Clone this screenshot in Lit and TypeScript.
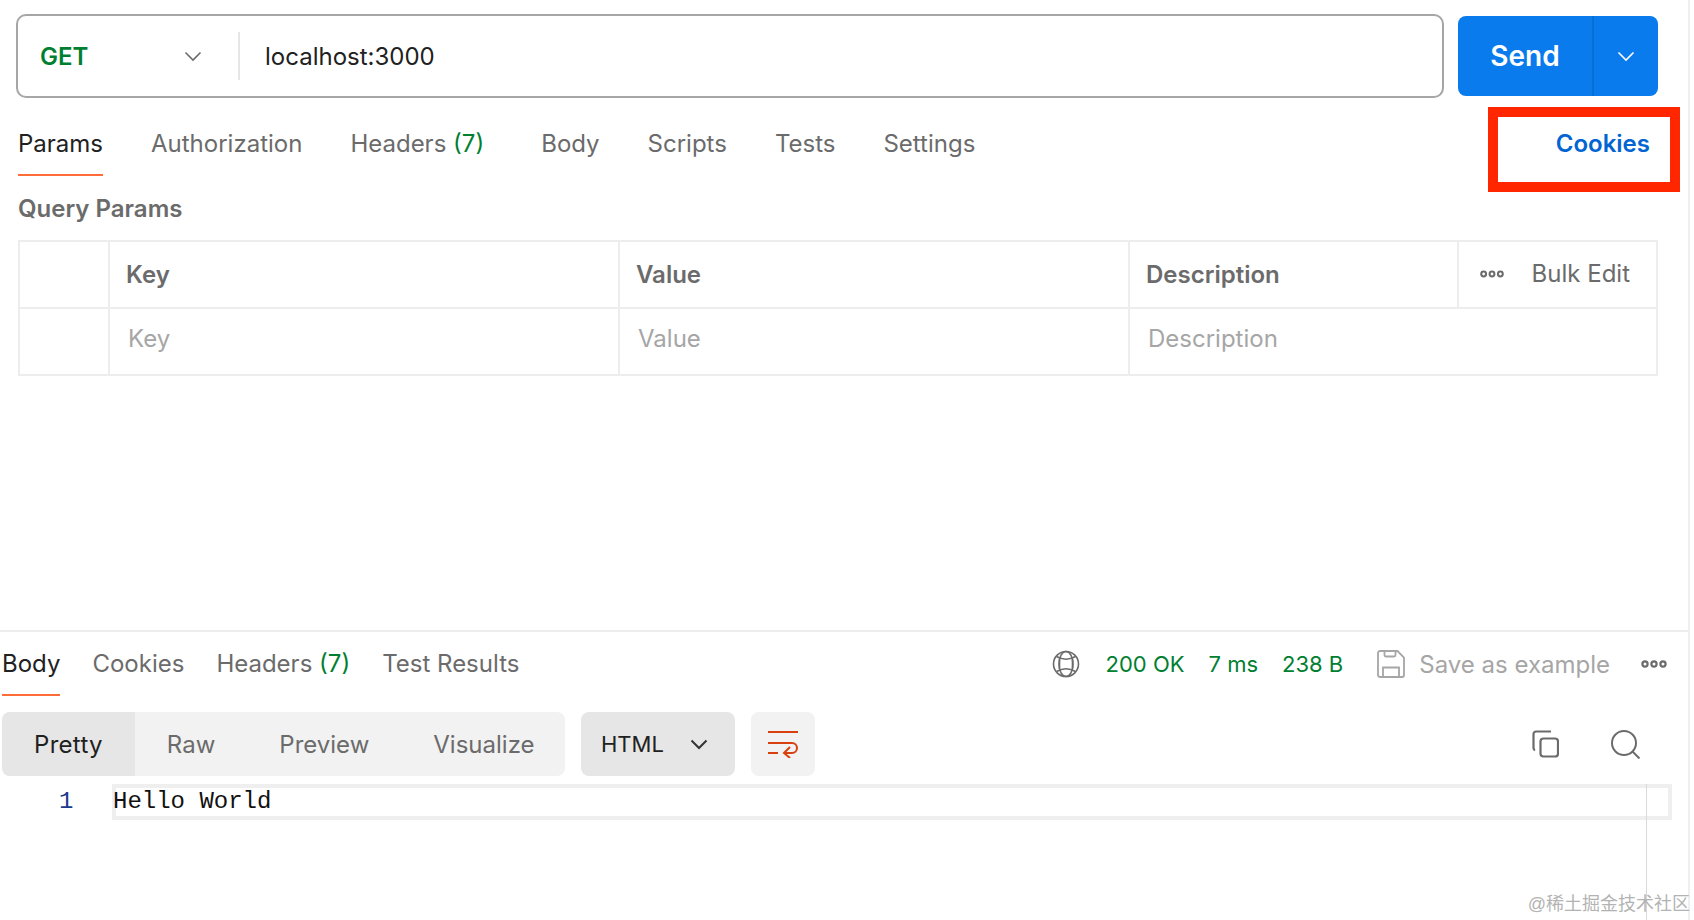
import { LitElement, html, css, svg } from "lit";
import { customElement } from "lit/decorators.js";

const chevron = (size: number, color: string, width = 1.6) => html`<svg width=${size} height=${size} viewBox="0 0 20 20" fill="none" stroke=${color} stroke-width=${width}><path d="M2.5 6.5 10 14l7.5-7.5" /></svg>`;

const dots = (size: number, color: string) => html`<svg width=${size} height="10" viewBox="0 0 28 10" fill="none" stroke=${color} stroke-width="2.2"><circle cx="5" cy="5" r="2.6" /><circle cx="14" cy="5" r="2.6" /><circle cx="23" cy="5" r="2.6" /></svg>`;

const globe = svg`<circle cx="14" cy="14" r="12.5" /><ellipse cx="14" cy="14" rx="7" ry="12.5" /><path d="M4.5 6.5Q14 12 23.5 6.5M4.5 21.5Q14 16 23.5 21.5M7.5 9.5v9M20.5 9.5v9" />`;

@customElement("app-root")
export class AppRoot extends LitElement {
  static styles = css`
    :host {
      display: block;
      position: relative;
      width: 1694px;
      height: 920px;
      overflow: hidden;
      background: #fff;
      font-family: Inter, "Noto Sans", sans-serif;
      font-size: 24px;
      color: #6b6b6b;
    }

    .page {
      width: 1690px;
      height: 920px;
      box-sizing: border-box;
      border-right: 2px solid #efefef;
    }

    .request {
      height: 632px;
      box-sizing: border-box;
      padding: 14px 30px 0 16px;
      border-bottom: 2px solid #ededed;
    }

    .url-row {
      display: flex;
      align-items: center;
      gap: 14px;
    }

    .url-bar {
      flex: 1;
      height: 84px;
      box-sizing: border-box;
      border: 2px solid #a6a6a6;
      border-radius: 10px;
      display: flex;
      align-items: center;
    }

    .method {
      width: 222px;
      box-sizing: border-box;
      height: 48px;
      padding: 0 35px 0 22px;
      display: flex;
      align-items: center;
      justify-content: space-between;
      border-right: 2px solid #e6e6e6;
      color: #007f31;
      font-weight: 600;
    }

    .url {
      padding-left: 25px;
      color: #212121;
    }

    .send {
      width: 200px;
      height: 80px;
      border-radius: 8px;
      background: #097bed;
      color: #fff;
      display: flex;
      align-items: center;
      font-size: 28px;
      font-weight: 600;
    }

    .send-label {
      width: 134px;
      height: 100%;
      display: flex;
      align-items: center;
      justify-content: center;
      border-right: 2px solid #0a6fd4;
    }

    .send-arrow {
      flex: 1;
      display: flex;
      justify-content: center;
    }

    .tabs {
      display: flex;
      align-items: flex-start;
      gap: 48px;
    }

    .req-tabs {
      margin: 0 0 0 2px;
      height: 78px;
      padding-top: 31px;
      box-sizing: border-box;
    }

    .tab {
      position: relative;
      line-height: 30px;
      white-space: nowrap;
    }

    .tab.active {
      color: #212121;
    }

    .tab.active::after {
      content: "";
      position: absolute;
      left: 0;
      right: 0;
      bottom: -17px;
      height: 2px;
      background: #ff6c37;
    }

    .tab .count {
      color: #007f31;
    }

    .tab.wide {
      margin-right: 9px;
    }

    .cookies {
      margin-left: auto;
      margin-right: 8px;
      color: #0265d2;
      font-weight: 600;
    }

    .query-title {
      font-weight: 600;
      line-height: 30px;
      margin: 18px 0 16px 2px;
    }

    table {
      width: 1640px;
      margin-left: 2px;
      border-collapse: collapse;
      table-layout: fixed;
    }

    td {
      border: 2px solid #ededed;
      padding: 0 16px;
      height: 67px;
      box-sizing: border-box;
    }

    .row-head td {
      font-weight: 600;
    }

    .row-body td {
      color: #a6a6a6;
      padding: 0 16px 6px 18px;
    }

    .check {
      width: 90px;
    }

    .key,
    .value {
      width: 510px;
    }

    .desc {
      width: 329px;
    }

    .row-head .bulk {
      font-weight: 400;
      padding: 0 26px 2px 20px;
    }

    .bulk-inner {
      display: flex;
      align-items: center;
      justify-content: space-between;
    }

    .response-tabs {
      display: flex;
      align-items: center;
      height: 64px;
      padding: 0 20px 0 2px;
    }

    .response-tabs .tabs {
      gap: 32px;
    }

    .meta {
      margin-left: auto;
      display: flex;
      align-items: center;
      color: #007f31;
      font-size: 22px;
    }

    .meta .stat {
      margin-left: 24px;
    }

    .meta .stat.first {
      margin-left: 26px;
    }

    .save {
      display: flex;
      align-items: center;
      gap: 14px;
      color: #a6a6a6;
      margin: 0 30px 0 34px;
    }

    .toolbar {
      display: flex;
      align-items: stretch;
      height: 64px;
      margin: 16px 0 0 2px;
    }

    .modes {
      display: flex;
      background: #f2f2f2;
      border-radius: 8px;
      overflow: hidden;
      width: 563px;
    }

    .mode {
      display: flex;
      align-items: center;
      padding: 0 32px;
    }

    .mode.active {
      background: #e6e6e6;
      color: #212121;
      letter-spacing: 0.3px;
    }

    .lang {
      width: 154px;
      margin-left: 16px;
      box-sizing: border-box;
      padding: 0 26px 0 20px;
      background: #e6e6e6;
      border-radius: 8px;
      color: #212121;
      font-size: 22px;
      display: flex;
      align-items: center;
      justify-content: space-between;
    }

    .wrap {
      width: 64px;
      margin-left: 16px;
      background: #f2f2f2;
      border-radius: 8px;
      display: flex;
      align-items: center;
      justify-content: center;
    }

    .tools {
      margin-left: auto;
      margin-right: 47px;
      display: flex;
      align-items: center;
      gap: 52px;
    }

    .code {
      display: flex;
      margin-top: 8px;
      font-family: "Liberation Mono", monospace;
      color: #111;
    }

    .line-no {
      width: 112px;
      box-sizing: border-box;
      padding: 4px 0 0 59px;
      line-height: 28px;
      color: #1c3a8c;
    }

    .line {
      width: 1560px;
      height: 36px;
      box-sizing: border-box;
      border: 4px solid #efefef;
      line-height: 28px;
    }

    .line span {
      margin-left: -3px;
    }

    .ruler {
      position: absolute;
      left: 1646px;
      top: 784px;
      bottom: 0;
      width: 1px;
      background: #d9d9d9;
    }

    .marker {
      position: absolute;
      left: 1488px;
      top: 107px;
      width: 192px;
      height: 85px;
      box-sizing: border-box;
      border: 10px solid #ff2600;
    }

    .watermark {
      position: absolute;
      right: 4px;
      top: 893px;
      font-size: 18px;
      line-height: 22px;
      color: #b3b3b3;
      font-family: "Liberation Sans", "Noto Sans CJK SC", sans-serif;
    }
  `;

  render() {
    return html`
      <div class="page">
        <section class="request">
          <div class="url-row">
            <div class="url-bar">
              <div class="method">GET ${chevron(20, "#6b6b6b")}</div>
              <div class="url">localhost:3000</div>
            </div>
            <div class="send">
              <div class="send-label">Send</div>
              <div class="send-arrow">${chevron(20, "#fff")}</div>
            </div>
          </div>
          <div class="tabs req-tabs">
            <div class="tab active">Params</div>
            <div class="tab">Authorization</div>
            <div class="tab wide">Headers <span class="count">(7)</span></div>
            <div class="tab">Body</div>
            <div class="tab">Scripts</div>
            <div class="tab">Tests</div>
            <div class="tab">Settings</div>
            <div class="tab cookies">Cookies</div>
          </div>
          <div class="query-title">Query Params</div>
          <table>
            <tr class="row-head">
              <td class="check"></td>
              <td class="key">Key</td>
              <td class="value">Value</td>
              <td class="desc">Description</td>
              <td class="bulk">
                <div class="bulk-inner">${dots(26, "#6b6b6b")}<span>Bulk Edit</span></div>
              </td>
            </tr>
            <tr class="row-body">
              <td></td>
              <td>Key</td>
              <td>Value</td>
              <td colspan="2">Description</td>
            </tr>
          </table>
        </section>

        <section>
          <div class="response-tabs">
            <div class="tabs">
              <div class="tab active">Body</div>
              <div class="tab">Cookies</div>
              <div class="tab">Headers <span class="count">(7)</span></div>
              <div class="tab">Test Results</div>
            </div>
            <div class="meta">
              <svg width="28" height="28" viewBox="0 0 28 28" fill="none" stroke="#6b6b6b" stroke-width="1.6">${globe}</svg>
              <span class="stat first">200 OK</span>
              <span class="stat">7 ms</span>
              <span class="stat">238 B</span>
            </div>
            <div class="save">
              <svg width="28" height="28" viewBox="0 0 28 28" fill="none" stroke="#a6a6a6" stroke-width="1.8">
                <path d="M3 1h17.5L27 7.5V25a2 2 0 0 1-2 2H3a2 2 0 0 1-2-2V3a2 2 0 0 1 2-2z" />
                <path d="M7.5 1v4a1.5 1.5 0 0 0 1.5 1.5h8A1.5 1.5 0 0 0 18.5 5V1" />
                <path d="M6 27V17.5h16V27" />
              </svg>
              Save as example
            </div>
            ${dots(28, "#6b6b6b")}
          </div>

          <div class="toolbar">
            <div class="modes">
              <div class="mode active">Pretty</div>
              <div class="mode">Raw</div>
              <div class="mode">Preview</div>
              <div class="mode">Visualize</div>
            </div>
            <div class="lang">HTML ${chevron(20, "#333", 2)}</div>
            <div class="wrap">
              <svg width="30" height="28" viewBox="0 0 30 28" fill="none" stroke="#d9400f" stroke-width="2">
                <path d="M0 2h30M0 13h24a5 5 0 0 1 0 10H17M0 23h10M22 17l-6 6 6 5" />
              </svg>
            </div>
            <div class="tools">
              <svg width="27" height="28" viewBox="0 0 27 28" fill="none" stroke="#6b6b6b" stroke-width="2.2">
                <path d="M19 1.5H4A2.5 2.5 0 0 0 1.5 4v14a2.5 2.5 0 0 0 1.5 2.2" />
                <rect x="8.5" y="8.5" width="17.5" height="18" rx="3" />
              </svg>
              <svg width="30" height="29" viewBox="0 0 30 29" fill="none" stroke="#6b6b6b" stroke-width="2">
                <circle cx="13" cy="13" r="12" />
                <path d="M21.5 21.5l7 7" />
              </svg>
            </div>
          </div>

          <div class="code">
            <div class="line-no">1</div>
            <div class="line"><span>Hello World</span></div>
          </div>
        </section>
      </div>

      <div class="ruler"></div>
      <div class="marker"></div>
      <div class="watermark">@稀土掘金技术社区</div>
    `;
  }
}
